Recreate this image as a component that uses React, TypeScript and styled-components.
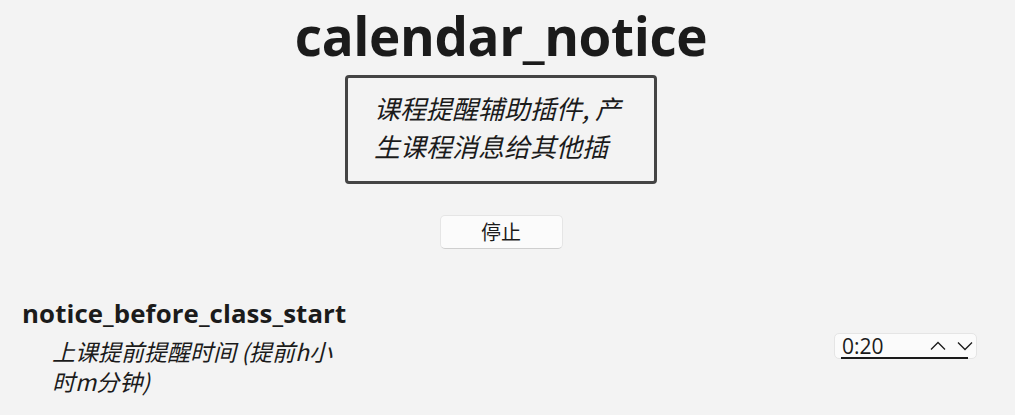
import React from "react";
import styled, { createGlobalStyle } from "styled-components";

const Global = createGlobalStyle`
  html, body { margin: 0; padding: 0; background: #f3f3f3; }
  body { font-family: "Noto Sans", "Noto Sans CJK SC", sans-serif; color: #1b1b1b; }
`;

const Page = styled.div`
  width: 1002px;
  height: 415px;
  overflow: hidden;
  display: flex;
  flex-direction: column;
`;

const Header = styled.div`
  display: flex;
  flex-direction: column;
  align-items: center;
`;

const Title = styled.h1`
  margin: 0;
  font-family: "Open Sans", "Noto Sans CJK SC", sans-serif;
  font-weight: 700;
  font-size: 53px;
  line-height: 72px;
  letter-spacing: -0.4px;
  color: #1b1b1b;
`;

const DescBox = styled.div`
  margin-top: 3px;
  width: 312px;
  height: 109px;
  box-sizing: border-box;
  border: 3px solid #444;
  border-radius: 4px;
  padding: 11px 26px 0 26px;
`;

const DescText = styled.div`
  height: 76px;
  overflow: hidden;
  font-style: italic;
  font-size: 26px;
  line-height: 38px;
  font-family: "Noto Sans CJK SC", sans-serif;
  color: #1b1b1b;
`;

const StopButton = styled.button`
  margin-top: 31px;
  width: 123px;
  height: 34px;
  box-sizing: border-box;
  background: #fbfbfb;
  border: 1px solid #e5e5e5;
  border-bottom-color: #cfcfcf;
  border-radius: 5px;
  font-family: "Noto Sans CJK SC", sans-serif;
  font-size: 20px;
  line-height: 30px;
  color: #1b1b1b;
  padding: 0;
`;

const Setting = styled.div`
  margin-top: 48px;
  padding-left: 22px;
  padding-right: 25px;
  display: flex;
  flex-direction: column;
`;

const SettingName = styled.div`
  font-family: "Open Sans", "Noto Sans CJK SC", sans-serif;
  font-weight: 700;
  font-size: 25.8px;
  line-height: 32px;
  letter-spacing: 0.1px;
`;

const SettingRow = styled.div`
  display: flex;
  justify-content: space-between;
  align-items: flex-start;
`;

const SettingDesc = styled.div`
  margin-left: 30px;
  margin-top: 7px;
  width: 292px;
  font-style: italic;
  font-size: 23px;
  line-height: 30px;
  font-family: "Noto Sans CJK SC", sans-serif;
`;

const Spin = styled.div`
  position: relative;
  margin-top: 4px;
  width: 143px;
  height: 26px;
  box-sizing: border-box;
  background: #fbfbfb;
  border: 1px solid #e5e5e5;
  border-radius: 5px;
  display: flex;
  align-items: center;
  padding-left: 7px;
  padding-right: 3px;
  &::after {
    content: "";
    position: absolute;
    left: 6px;
    right: 8px;
    bottom: -1px;
    height: 2px;
    background: #1b1b1b;
  }
`;

const SpinValue = styled.span`
  flex: 1;
  font-family: "Open Sans", sans-serif;
  font-size: 21px;
  line-height: 24px;
  color: #1b1b1b;
`;

const Arrows = styled.div`
  display: flex;
  gap: 11px;
  align-items: center;
`;

const Chevron = ({ up }: { up?: boolean }) => (
  <svg width="16" height="10" viewBox="0 0 16 10">
    <path
      d={up ? "M1 8.5 L8 1.5 L15 8.5" : "M1 1.5 L8 8.5 L15 1.5"}
      fill="none"
      stroke="#1b1b1b"
      strokeWidth="1.3"
    />
  </svg>
);

export default function App() {
  return (
    <Page>
      <Global />
      <Header>
        <Title>calendar_notice</Title>
        <DescBox>
          <DescText>课程提醒辅助插件, 产生课程消息给其他插件</DescText>
        </DescBox>
        <StopButton>停止</StopButton>
      </Header>
      <Setting>
        <SettingName>notice_before_class_start</SettingName>
        <SettingRow>
          <SettingDesc>上课提前提醒时间 (提前h小时m分钟)</SettingDesc>
          <Spin>
            <SpinValue>0:20</SpinValue>
            <Arrows>
              <Chevron up />
              <Chevron />
            </Arrows>
          </Spin>
        </SettingRow>
      </Setting>
    </Page>
  );
}
